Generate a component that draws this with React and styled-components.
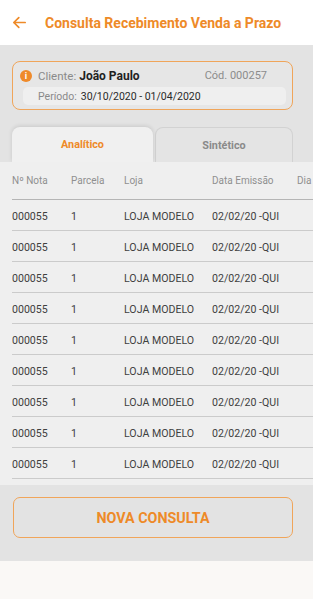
import React from 'react';
import styled, { createGlobalStyle } from 'styled-components';

const GlobalStyle = createGlobalStyle`
  html, body {
    margin: 0;
    padding: 0;
    background: #faf8f6;
    font-family: Roboto, "Liberation Sans", sans-serif;
  }
`;

const Page = styled.div`
  width: 313px;
  height: 599px;
  display: flex;
  flex-direction: column;
  overflow: hidden;
  background: #faf8f6;
`;

const Header = styled.div`
  height: 45px;
  display: flex;
  align-items: center;
  background: #ffffff;
  padding-left: 11px;
  box-sizing: border-box;
`;

const BackIcon = styled.svg`
  width: 17px;
  height: 17px;
  margin-right: 17px;
`;

const Title = styled.div`
  color: #ee8a28;
  font-weight: 700;
  font-size: 14px;
`;

const Body = styled.div`
  background: #e3e3e3;
  height: 516px;
  display: flex;
  flex-direction: column;
`;

const InfoCard = styled.div`
  margin: 16px 20px 0 12px;
  height: 49px;
  box-sizing: border-box;
  border: 1px solid #f0a55a;
  border-radius: 8px;
  background: #e6e6e6;
  padding: 5px 7px 0 7px;
`;

const InfoRow = styled.div`
  display: flex;
  align-items: center;
  height: 17px;
  font-size: 11.5px;
  color: #8a8a8a;
`;

const InfoIcon = styled.div`
  width: 12px;
  height: 12px;
  border-radius: 50%;
  background: #ef8a2a;
  color: #fff;
  font-size: 9px;
  font-weight: 700;
  display: flex;
  align-items: center;
  justify-content: center;
  margin-right: 6px;
`;

const Strong = styled.span`
  color: #1f1f1f;
  font-weight: 700;
  font-size: 12px;
  margin-left: 3px;
`;

const Code = styled.span`
  margin-left: auto;
  margin-right: 18px;
  font-size: 11px;
  color: #8c8c8c;
`;

const PeriodBox = styled.div`
  margin: 3px 0 0 3px;
  width: 263px;
  height: 18px;
  border-radius: 5px;
  background: #efefef;
  display: flex;
  align-items: center;
  padding-left: 15px;
  box-sizing: border-box;
  font-size: 10.5px;
  color: #8a8a8a;
`;

const Dark = styled.span`
  color: #2a2a2a;
  margin-left: 4px;
`;

const Tabs = styled.div`
  display: flex;
  margin: 17px 20px 0 12px;
  height: 35px;
  align-items: flex-end;
`;

const Tab = styled.div`
  flex: ${p => (p.$active ? '0 0 141px' : '1')};
  height: 35px;
  margin-left: ${p => (p.$active ? '0' : '2px')};
  box-sizing: border-box;
  border-radius: 8px 8px 0 0;
  display: flex;
  align-items: center;
  justify-content: center;
  font-size: 10.8px;
  font-weight: 700;
  color: ${p => (p.$active ? '#ee8a28' : '#8a8a8a')};
  background: ${p => (p.$active ? '#f0f0f0' : '#e4e4e4')};
  border: ${p => (p.$active ? 'none' : '1px solid #d2d2d2')};
  border-bottom: none;
  box-shadow: ${p => (p.$active ? '0 -1px 4px rgba(0,0,0,0.12)' : 'none')};
  position: relative;
  z-index: ${p => (p.$active ? 1 : 0)};
`;

const TableArea = styled.div`
  background: #efefef;
  padding-left: 12px;
  height: 323px;
  overflow: hidden;
  position: relative;
  z-index: 1;
`;

const Table = styled.div`
  width: 340px;
`;

const Row = styled.div`
  display: grid;
  grid-template-columns: 59px 53px 88px 85px 60px;
  align-items: center;
  height: ${p => (p.$head ? '38px' : '30px')};
  border-bottom: 1px solid ${p => (p.$head ? '#b5b5b5' : '#cbcbcb')};
  font-size: ${p => (p.$head ? '10px' : '10.6px')};
  color: ${p => (p.$head ? '#8f8f8f' : '#404040')};
  white-space: nowrap;
  padding-top: ${p => (p.$head ? '0' : '2px')};
  box-sizing: border-box;
  height: ${p => (p.$head ? '38px' : '31px')};
`;

const Cell = styled.div`
  overflow: hidden;
`;

const Footer = styled.div`
  padding: 12px 20px 0 13px;
`;

const NewButton = styled.button`
  width: 100%;
  height: 41px;
  border: 1px solid #f0a55a;
  border-radius: 7px;
  background: transparent;
  color: #ee8a28;
  font-family: Roboto, "Liberation Sans", sans-serif;
  font-weight: 700;
  font-size: 14.3px;
  cursor: pointer;
`;

const rows = Array.from({ length: 9 }, () => ['000055', '1', 'LOJA MODELO', '02/02/20 -QUI', '']);

export default function App() {
  return (
    <>
      <GlobalStyle />
      <Page>
        <Header>
          <BackIcon viewBox="0 0 24 24" fill="none" stroke="#ee8a28" strokeWidth="2.4" strokeLinecap="round" strokeLinejoin="round">
            <path d="M20 12H4M11 5l-7 7 7 7" />
          </BackIcon>
          <Title>Consulta Recebimento Venda a Prazo</Title>
        </Header>
        <Body>
          <InfoCard>
            <InfoRow>
              <InfoIcon>i</InfoIcon>
              Cliente:<Strong>João Paulo</Strong>
              <Code>Cód. 000257</Code>
            </InfoRow>
            <PeriodBox>
              Período:<Dark>30/10/2020 - 01/04/2020</Dark>
            </PeriodBox>
          </InfoCard>
          <Tabs>
            <Tab $active>Analítico</Tab>
            <Tab>Sintético</Tab>
          </Tabs>
          <TableArea>
            <Table>
              <Row $head>
                <Cell>Nº Nota</Cell>
                <Cell>Parcela</Cell>
                <Cell>Loja</Cell>
                <Cell>Data Emissão</Cell>
                <Cell>Dia</Cell>
              </Row>
              {rows.map((r, i) => (
                <Row key={i}>
                  {r.map((c, j) => (
                    <Cell key={j}>{c}</Cell>
                  ))}
                </Row>
              ))}
            </Table>
          </TableArea>
          <Footer>
            <NewButton>NOVA CONSULTA</NewButton>
          </Footer>
        </Body>
      </Page>
    </>
  );
}
